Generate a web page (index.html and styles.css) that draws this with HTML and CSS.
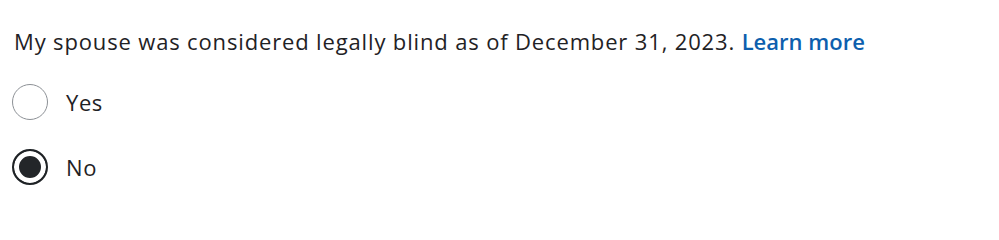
FILE: index.html
```html
<!DOCTYPE html>
<html lang="en">
<head>
<meta charset="utf-8">
<title>Legally blind</title>
<link rel="stylesheet" href="styles.css">
</head>
<body>
<div class="question" role="radiogroup">
  <p class="prompt">My spouse was considered legally blind as of December 31, 2023. <a class="learn" href="#">Learn more</a></p>
  <div class="options">
    <label class="option">
      <span class="radio"></span>
      <span class="label-text">Yes</span>
    </label>
    <label class="option">
      <span class="radio checked"></span>
      <span class="label-text">No</span>
    </label>
  </div>
</div>
</body>
</html>
```
FILE: styles.css
```css
html, body {
  margin: 0;
  padding: 0;
  background: #ffffff;
}
body {
  font-family: "Open Sans", "Lato", sans-serif;
  color: #1f2225;
}
.question {
  padding: 26px 0 0 14px;
}
.prompt {
  margin: 0;
  font-size: 22px;
  line-height: 30px;
  letter-spacing: 0.85px;
}
.learn {
  color: #0d5fae;
  font-weight: 600;
  letter-spacing: 0;
  text-decoration: none;
}
.options {
  display: flex;
  flex-direction: column;
  gap: 29px;
  margin-top: 28px;
}
.option {
  display: flex;
  align-items: center;
  gap: 18px;
  margin-left: -2px;
}
.radio {
  box-sizing: border-box;
  width: 36px;
  height: 36px;
  border-radius: 50%;
  border: 1px solid #8d9196;
  background: #fff;
  flex: none;
}
.radio.checked {
  border: 2.5px solid #1f2326;
  box-shadow: inset 0 0 0 5px #fff;
  background: #232629;
}
.label-text {
  font-size: 22px;
  line-height: 30px;
  letter-spacing: 0.6px;
}
```
